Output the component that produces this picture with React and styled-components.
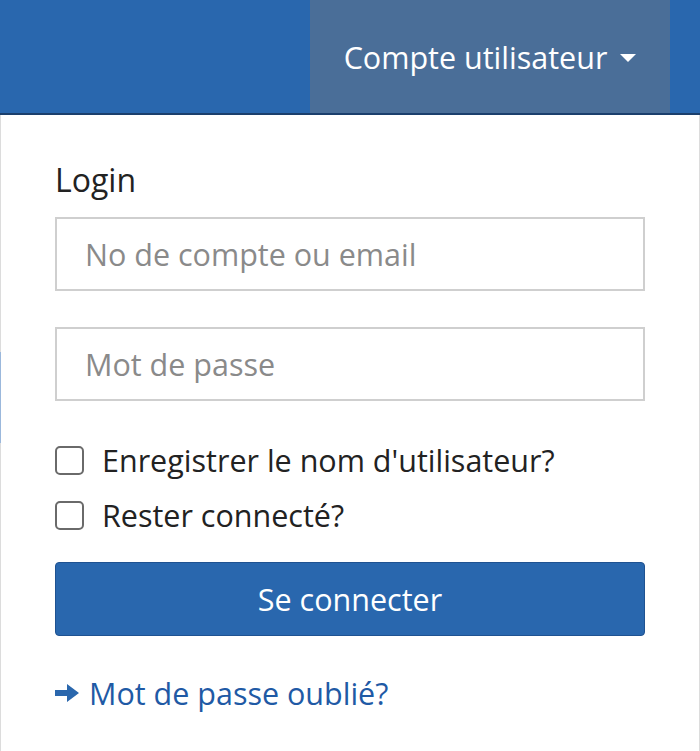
import React from "react";
import styled, { createGlobalStyle } from "styled-components";

const GlobalStyle = createGlobalStyle`
  html, body {
    margin: 0;
    padding: 0;
    background: #fff;
    font-family: "Open Sans", "Noto Sans", sans-serif;
  }
  * { box-sizing: border-box; }
`;

const App = () => {
  return (
    <Page>
      <GlobalStyle />
      <Header>
        <AccountButton>
          Compte utilisateur
          <Caret />
        </AccountButton>
      </Header>
      <Panel>
        <Title>Login</Title>
        <Input placeholder="No de compte ou email" />
        <Input type="password" placeholder="Mot de passe" />
        <Checks>
          <CheckRow>
            <Box type="checkbox" />
            Enregistrer le nom d'utilisateur?
          </CheckRow>
          <CheckRow>
            <Box type="checkbox" />
            Rester connecté?
          </CheckRow>
        </Checks>
        <SubmitButton>Se connecter</SubmitButton>
        <ForgotLink href="#">
          <svg width="25" height="20" viewBox="0 0 25 20">
            <path d="M0 7 H12 V1 L24 10 L12 19 V13 H0 Z" fill="#2a67ad" />
          </svg>
          Mot de passe oublié?
        </ForgotLink>
      </Panel>
    </Page>
  );
};

const Page = styled.div`
  width: 700px;
  height: 751px;
  overflow: hidden;
  background: #fff;
`;

const Header = styled.header`
  height: 115px;
  background: #2967ae;
  border-bottom: 2px solid #1b3f6c;
  display: flex;
  justify-content: flex-end;
  padding-right: 30px;
`;

const AccountButton = styled.button`
  width: 360px;
  height: 113px;
  background: #4a6e98;
  border: none;
  color: #fff;
  font-family: "Open Sans", "Noto Sans", sans-serif;
  font-size: 30.5px;
  display: flex;
  align-items: center;
  justify-content: center;
  gap: 13px;
  padding: 0;
  cursor: pointer;
`;

const Caret = styled.span`
  width: 0;
  height: 0;
  border-left: 8px solid transparent;
  border-right: 8px solid transparent;
  border-top: 8px solid #fff;
  margin-top: 2px;
`;

const Panel = styled.div`
  position: relative;
  height: 636px;
  border-left: 1px solid #dcdcdc;
  border-right: 1px solid #dcdcdc;
  padding: 43px 54px 0 54px;
  display: flex;
  flex-direction: column;

  &::before {
    content: "";
    position: absolute;
    left: -1px;
    top: 237px;
    width: 1px;
    height: 91px;
    background: #9bb8dc;
  }
`;

const Title = styled.div`
  font-size: 32px;
  color: #222;
  line-height: 44px;
  margin-bottom: 15px;
`;

const Input = styled.input`
  width: 100%;
  height: 74px;
  border: 2px solid #cfcfcf;
  border-radius: 0;
  padding: 0 28px;
  font-family: "Open Sans", "Noto Sans", sans-serif;
  font-size: 30.5px;
  color: #333;
  margin-bottom: 36px;
  outline: none;

  &::placeholder {
    color: #8a8a8a;
  }
`;

const Checks = styled.div`
  display: flex;
  flex-direction: column;
  gap: 11px;
  margin-top: 1px;
`;

const CheckRow = styled.label`
  display: flex;
  align-items: center;
  gap: 18px;
  font-size: 30.5px;
  color: #222;
  line-height: 44px;
`;

const Box = styled.input`
  appearance: none;
  margin: 0;
  width: 29px;
  height: 29px;
  border: 2px solid #6a6a6a;
  border-radius: 5px;
  background: #fff;
`;

const SubmitButton = styled.button`
  margin-top: 25px;
  height: 74px;
  width: 100%;
  background: #2967ae;
  border: 1px solid #1f5291;
  border-radius: 4px;
  color: #fff;
  font-family: "Open Sans", "Noto Sans", sans-serif;
  font-size: 30.5px;
  cursor: pointer;
`;

const ForgotLink = styled.a`
  margin-top: 36px;
  display: flex;
  align-items: center;
  gap: 9px;
  color: #1f5aa5;
  font-size: 30.5px;
  text-decoration: none;
`;

export default App;
